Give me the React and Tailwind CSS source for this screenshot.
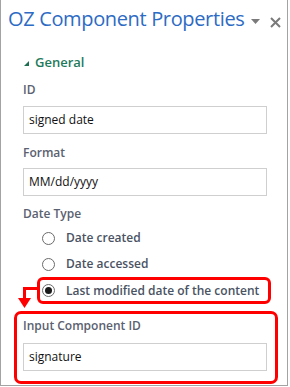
import React from "react";

const font = { fontFamily: "'Open Sans', 'Noto Sans', sans-serif" };

function Radio({ checked }) {
  return (
    <span className="flex items-center justify-center w-[13px] h-[13px] rounded-full border border-[#6b6b6b] bg-white shrink-0">
      {checked && <span className="w-[7px] h-[7px] rounded-full bg-[#1a1a1a]" />}
    </span>
  );
}

function Field({ value }) {
  return (
    <div className="h-[28px] w-[244px] border border-[#cfcfcf] bg-white flex items-center pl-[5px] text-[12px] text-[#111]">
      {value}
    </div>
  );
}

export default function App() {
  return (
    <div className="w-[290px] h-[387px] bg-white font-['Open_Sans']" style={font}>
      <div className="relative w-[288px] h-[386px] border-l border-r border-b border-[#a3a3a3]">
        {/* title bar */}
        <div className="flex items-start pt-[5px] pl-[7px]">
          <h1 className="text-[20px] leading-[28px] tracking-[-0.35px] text-[#2d6bc4] whitespace-nowrap">
            OZ Component Properties
          </h1>
          <svg className="ml-[7px] mt-[14px] shrink-0" width="9" height="5" viewBox="0 0 9 5">
            <path d="M0 0h9L4.5 5z" fill="#7a7a7a" />
          </svg>
          <svg className="ml-[10px] mt-[12px] shrink-0" width="11" height="11" viewBox="0 0 11 11">
            <path d="M1 1l9 9M10 1l-9 9" stroke="#7a7a7a" strokeWidth="2" />
          </svg>
        </div>

        <div className="pl-[22px]">
          <div className="mt-[21px] flex items-center h-[18px] text-[13px] font-semibold text-[#1e7a5c]">
            <svg className="ml-[1px] mr-[6px]" width="5" height="5" viewBox="0 0 5 5">
              <path d="M5 0v5H0z" fill="#1e6e52" />
            </svg>
            General
          </div>

          <div className="mt-[10px] text-[12px] leading-[16px] font-semibold text-[#5a6170]">ID</div>
          <div className="mt-[8px]">
            <Field value="signed date" />
          </div>

          <div className="mt-[11px] text-[12px] leading-[16px] font-semibold text-[#5a6170]">Format</div>
          <div className="mt-[7px]">
            <Field value="MM/dd/yyyy" />
          </div>

          <div className="mt-[10px] text-[12px] leading-[16px] font-semibold text-[#5a6170]">Date Type</div>

          <div className="mt-[3px] flex flex-col">
            <div className="h-[26px] flex items-center pl-[19px] gap-[11px] text-[12px] font-semibold text-[#4a5363]">
              <Radio />
              Date created
            </div>
            <div className="h-[26px] flex items-center pl-[19px] gap-[11px] text-[12px] font-semibold text-[#4a5363]">
              <Radio />
              Date accessed
            </div>
            <div className="relative ml-[14px] w-[234px] h-[27px] border-[3px] border-[#ff0000] rounded-[6px] flex items-center pl-[2px] gap-[11px] text-[12px] font-semibold text-[#4a5363]">
              <Radio checked />
              Last modified date of the content
            </div>
          </div>

          <div className="mt-[7px] ml-[-9px] w-[264px] border-[3px] border-[#ff0000] rounded-[7px] pt-[4px] pb-[10px] pl-[6px]">
            <div className="text-[12px] leading-[16px] font-semibold text-[#5a6170]">Input Component ID</div>
            <div className="mt-[9px]">
              <Field value="signature" />
            </div>
          </div>
        </div>

        {/* annotation arrow */}
        <svg className="absolute left-[16px] top-[285px]" width="22" height="24" viewBox="0 0 22 24">
          <path d="M22 3.5H7.5V14" stroke="#ff0000" strokeWidth="3" fill="none" />
          <path d="M1 13h13l-6.5 10z" fill="#ff0000" />
        </svg>
      </div>
    </div>
  );
}
